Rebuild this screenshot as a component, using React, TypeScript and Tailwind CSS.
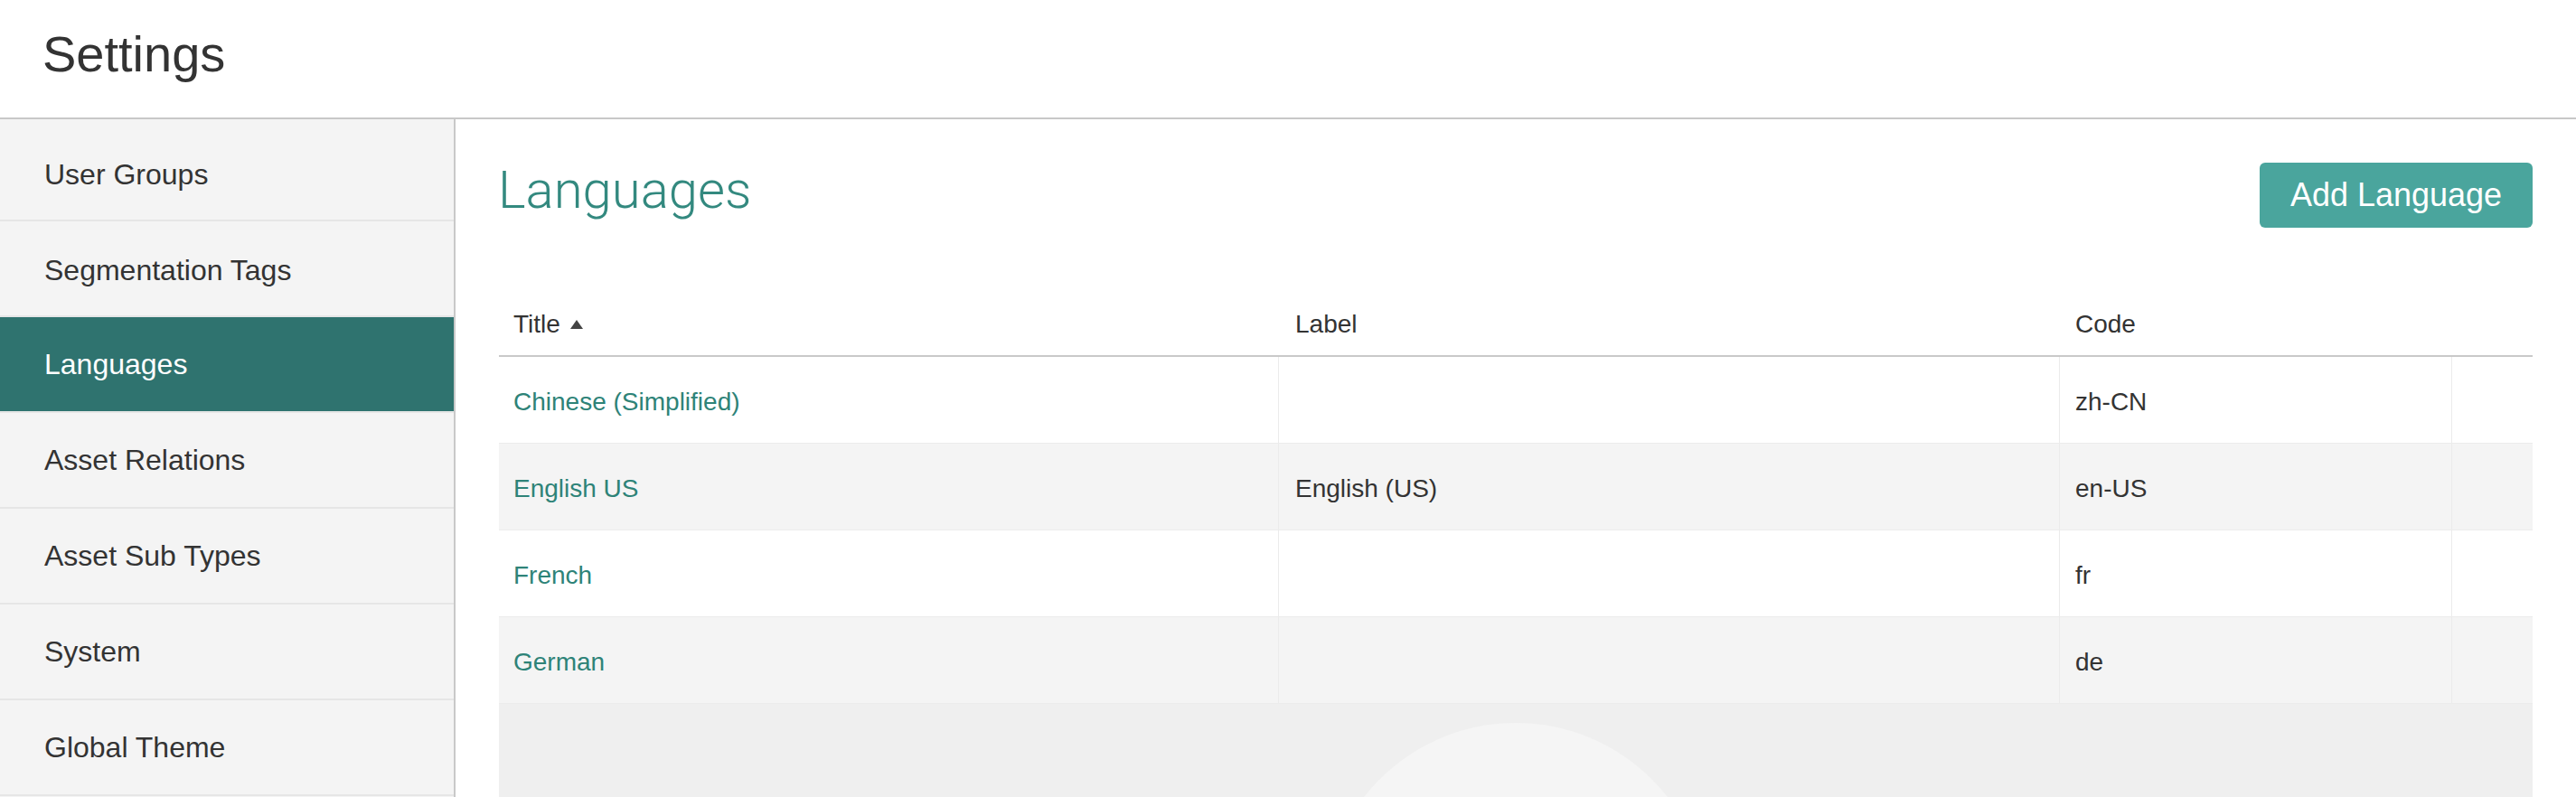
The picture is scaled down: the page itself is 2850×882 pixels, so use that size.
export default function App() {
  const nav = [
    "User Groups",
    "Segmentation Tags",
    "Languages",
    "Asset Relations",
    "Asset Sub Types",
    "System",
    "Global Theme",
  ];
  const rows = [
    { title: "Chinese (Simplified)", label: "", code: "zh-CN" },
    { title: "English US", label: "English (US)", code: "en-US" },
    { title: "French", label: "", code: "fr" },
    { title: "German", label: "", code: "de" },
  ];
  return (
    <div className="h-[882px] w-[2850px] overflow-hidden bg-white text-[#333333] font-['Liberation_Sans',Arial,sans-serif]">
      <header className="h-[132px] border-b-2 border-[#c8c8c8] flex items-center pl-[47px] pb-[10px]">
        <h1 className="text-[56px] leading-none text-[#333333]">Settings</h1>
      </header>
      <div className="flex">
        <nav className="w-[504px] shrink-0 h-[750px] bg-[#f4f4f4] border-r-2 border-[#c9c9c9] pt-[7px] flex flex-col">
          {nav.map((n, i) => (
            <div
              key={n}
              className={
                n === "Languages"
                  ? "h-[106px] border-b-2 border-[#e6e6e6] bg-[#2f736f] text-white flex items-center pl-[49px] text-[32px] leading-none"
                  : i < 2
                  ? "h-[106px] border-b-2 border-[#e6e6e6] text-[#333333] flex items-center pl-[49px] pt-[3px] text-[32px] leading-none"
                  : "h-[106px] border-b-2 border-[#e6e6e6] text-[#333333] flex items-center pl-[49px] text-[32px] leading-none"
              }
            >
              {n}
            </div>
          ))}
        </nav>
        <main className="flex-1 px-[48px]">
          <div className="flex items-start justify-between pt-[44px]">
            <h2 className="ml-[-1px] mt-[2px] text-[58px] leading-[64px] font-light text-[#33897f] font-['Roboto','Liberation_Sans',sans-serif]">
              Languages
            </h2>
            <button className="mt-[4px] h-[72px] w-[302px] rounded-[6px] bg-[#4aa59d] text-white text-[36px] leading-none flex items-center justify-center">
              Add Language
            </button>
          </div>
          <div className="mt-[69px] text-[28px] leading-none">
            <div className="grid grid-cols-[863px_864px_434px_89px] h-[74px] border-b-2 border-[#c9c9c9] items-center pt-[4px]">
              <div className="pl-[16px] flex items-center gap-[11px]">
                <span>Title</span>
                <svg width="14" height="10" viewBox="0 0 14 10">
                  <polygon points="7,0 14,10 0,10" fill="#444444" />
                </svg>
              </div>
              <div className="pl-[18px]">Label</div>
              <div className="pl-[17px]">Code</div>
              <div />
            </div>
            {rows.map((r, i) => (
              <div
                key={r.code}
                className={
                  i % 2 === 1
                    ? "grid grid-cols-[863px_864px_434px_89px] h-[96px] border-b border-[#ececec] bg-[#f4f4f4]"
                    : "grid grid-cols-[863px_864px_434px_89px] h-[96px] border-b border-[#ececec] bg-white"
                }
              >
                <div className="pl-[16px] pt-[4px] flex items-center border-r border-[#ebebeb] text-[#2e8378]">{r.title}</div>
                <div className="pl-[18px] pt-[4px] flex items-center border-r border-[#ebebeb]">{r.label}</div>
                <div className="pl-[17px] pt-[4px] flex items-center border-r border-[#ebebeb]">{r.code}</div>
                <div />
              </div>
            ))}
            <div className="relative h-[200px] bg-[#efefef] overflow-hidden">
              <div className="absolute left-[912px] top-[21px] w-[426px] h-[426px] rounded-full bg-[#f5f5f5]" />
            </div>
          </div>
        </main>
      </div>
    </div>
  );
}
